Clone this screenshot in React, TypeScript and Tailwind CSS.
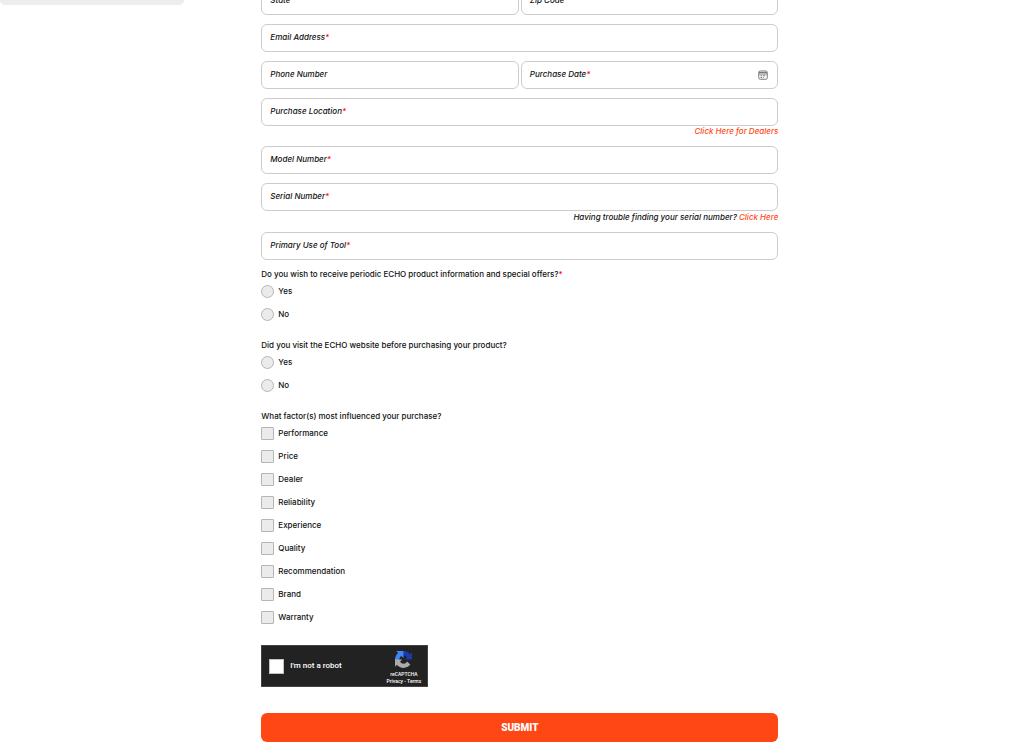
import type { ReactNode } from "react";

const factors = [
  "Performance",
  "Price",
  "Dealer",
  "Reliability",
  "Experience",
  "Quality",
  "Recommendation",
  "Brand",
  "Warranty",
];

function Star() {
  return <span className="text-[#f00]">*</span>;
}

type FieldProps = {
  id: string;
  label: string;
  required?: boolean;
  children?: ReactNode;
};

function Field({ id, label, required, children }: FieldProps) {
  return (
    <div className="flex h-7 min-w-0 flex-1 items-center rounded-md border border-[#ccc] bg-white px-2">
      <label htmlFor={id} className="shrink-0 pb-0.5 italic">
        {label}
        {required && <Star />}
      </label>
      <input id={id} type="text" className="h-full min-w-0 flex-1 px-1 outline-none" />
      {children}
    </div>
  );
}

function CalendarIcon() {
  return (
    <svg viewBox="0 0 20 20" className="size-[10px]" fill="none" stroke="#777" strokeWidth="2">
      <rect x="1.5" y="2" width="17" height="16.5" rx="3" />
      <path d="M2 5h16M2 8h16" />
      <path d="M5 11.5h3M9.500 11.500h5M5 15h3M9.500 15h2" />
    </svg>
  );
}

function YesNo({ name, children }: { name: string; children: ReactNode }) {
  return (
    <fieldset className="mb-[13px]">
      <legend className="h-3">{children}</legend>
      {["Yes", "No"].map((value) => (
        <label key={value} className="flex h-[23px] items-center gap-1">
          <input
            type="radio"
            name={name}
            value={value}
            className="size-[13px] appearance-none rounded-full border border-[#b5b5b5] bg-[#ebebeb] checked:bg-[#ff4716]"
          />
          <span className="pb-px">{value}</span>
        </label>
      ))}
    </fieldset>
  );
}

function RecaptchaLogo() {
  return (
    <svg viewBox="0 0 64 64" className="size-[17px]">
      <path
        fill="#1c3aa9"
        d="M64 31.955l-.033-1.37V4.687l-7.16 7.16C50.948 4.674 42.033.093 32.05.093c-10.4 0-19.622 4.96-25.458 12.64l11.736 11.86a15.55 15.55 0 0 1 4.754-5.334c2.05-1.6 4.952-2.906 8.968-2.906.485 0 .86.057 1.135.163 4.976.393 9.288 3.14 11.828 7.124l-8.307 8.307L64 31.953"
      />
      <path
        fill="#4285f4"
        d="M31.862.094l-1.37.033H4.594l7.16 7.16C4.58 13.147 0 22.06 0 32.046c0 10.4 4.96 19.622 12.64 25.458L24.5 45.768a15.55 15.55 0 0 1-5.334-4.754c-1.6-2.05-2.906-4.952-2.906-8.968 0-.485.057-.86.163-1.135.393-4.976 3.14-9.288 7.124-11.828l8.307 8.307L31.86.095"
      />
      <path
        fill="#ababab"
        d="M.001 32.045l.033 1.37v25.898l7.16-7.16c5.86 7.173 14.774 11.754 24.76 11.754 10.4 0 19.622-4.96 25.458-12.64l-11.736-11.86a15.55 15.55 0 0 1-4.754 5.334c-2.05 1.6-4.952 2.906-8.968 2.906-.485 0-.86-.057-1.135-.163-4.976-.393-9.288-3.14-11.828-7.124l8.307-8.307c-10.522.04-22.4.066-27.295-.005"
      />
    </svg>
  );
}

function Recaptcha() {
  return (
    <div className="flex h-[42px] w-[167px] justify-between border border-[#444] bg-[#222] pl-[7px] pr-1.5 font-['Roboto',sans-serif] text-white">
      <label className="flex items-center gap-1.5">
        <input
          type="checkbox"
          className="size-[15px] appearance-none border border-[#c1c1c1] bg-white checked:bg-[#4285f4]"
        />
        I'm not a robot
      </label>
      <div className="flex flex-col items-center pt-[5px] text-[5px] leading-[7px]">
        <RecaptchaLogo />
        <span className="mt-[3px]">reCAPTCHA</span>
        <div>
          <a href="#privacy">Privacy</a> - <a href="#terms">Terms</a>
        </div>
      </div>
    </div>
  );
}

export default function App() {
  return (
    <div className="flex items-start overflow-hidden bg-white">
      <aside className="h-[5px] w-[18%] rounded-b-md bg-[#ededed]" />
      <form className="-mt-[13px] ml-[77px] max-w-[517px] flex-1 pb-3 font-['Inter',sans-serif] text-[8px] leading-3 font-medium text-[#111]">
        <div className="flex flex-col gap-[9px]">
          <div className="flex gap-0.5">
            <Field id="state" label="State" />
            <Field id="zip" label="Zip Code" />
          </div>
          <div className="flex">
            <Field id="email" label="Email Address" required />
          </div>
          <div className="flex gap-0.5">
            <Field id="phone" label="Phone Number" />
            <Field id="date" label="Purchase Date" required>
              <button type="button" aria-label="Choose date" className="pr-px">
                <CalendarIcon />
              </button>
            </Field>
          </div>
          <div>
            <div className="flex">
              <Field id="location" label="Purchase Location" required />
            </div>
            <p className="text-right leading-[11px] italic">
              <a href="#dealers" className="text-[#ff4716]">
                Click Here for Dealers
              </a>
            </p>
          </div>
          <div className="flex">
            <Field id="model" label="Model Number" required />
          </div>
          <div>
            <div className="flex">
              <Field id="serial" label="Serial Number" required />
            </div>
            <p className="text-right leading-3 italic">
              Having trouble finding your serial number?{" "}
              <a href="#serial-help" className="text-[#ff4716]">
                Click Here
              </a>
            </p>
          </div>
          <div className="flex">
            <Field id="use" label="Primary Use of Tool" required />
          </div>
        </div>

        <div className="mt-2">
          <YesNo name="offers">
            Do you wish to receive periodic ECHO product information and special offers?
            <Star />
          </YesNo>
          <YesNo name="visited">
            Did you visit the ECHO website before purchasing your product?
          </YesNo>
          <fieldset className="mb-4">
            <legend className="h-3">What factor(s) most influenced your purchase?</legend>
            {factors.map((factor) => (
              <label key={factor} className="flex h-[23px] items-center gap-1">
                <input
                  type="checkbox"
                  name="factors"
                  value={factor}
                  className="size-[13px] appearance-none rounded-[1px] border border-[#b5b5b5] bg-[#ebebeb] checked:bg-[#ff4716]"
                />
                <span className="pb-0.5">{factor}</span>
              </label>
            ))}
          </fieldset>
        </div>

        <Recaptcha />

        <button
          type="submit"
          className="mt-[26px] h-[29px] w-full rounded-md bg-[#ff4716] font-['Roboto',sans-serif] text-[10px] font-black text-white"
        >
          SUBMIT
        </button>
      </form>
    </div>
  );
}
